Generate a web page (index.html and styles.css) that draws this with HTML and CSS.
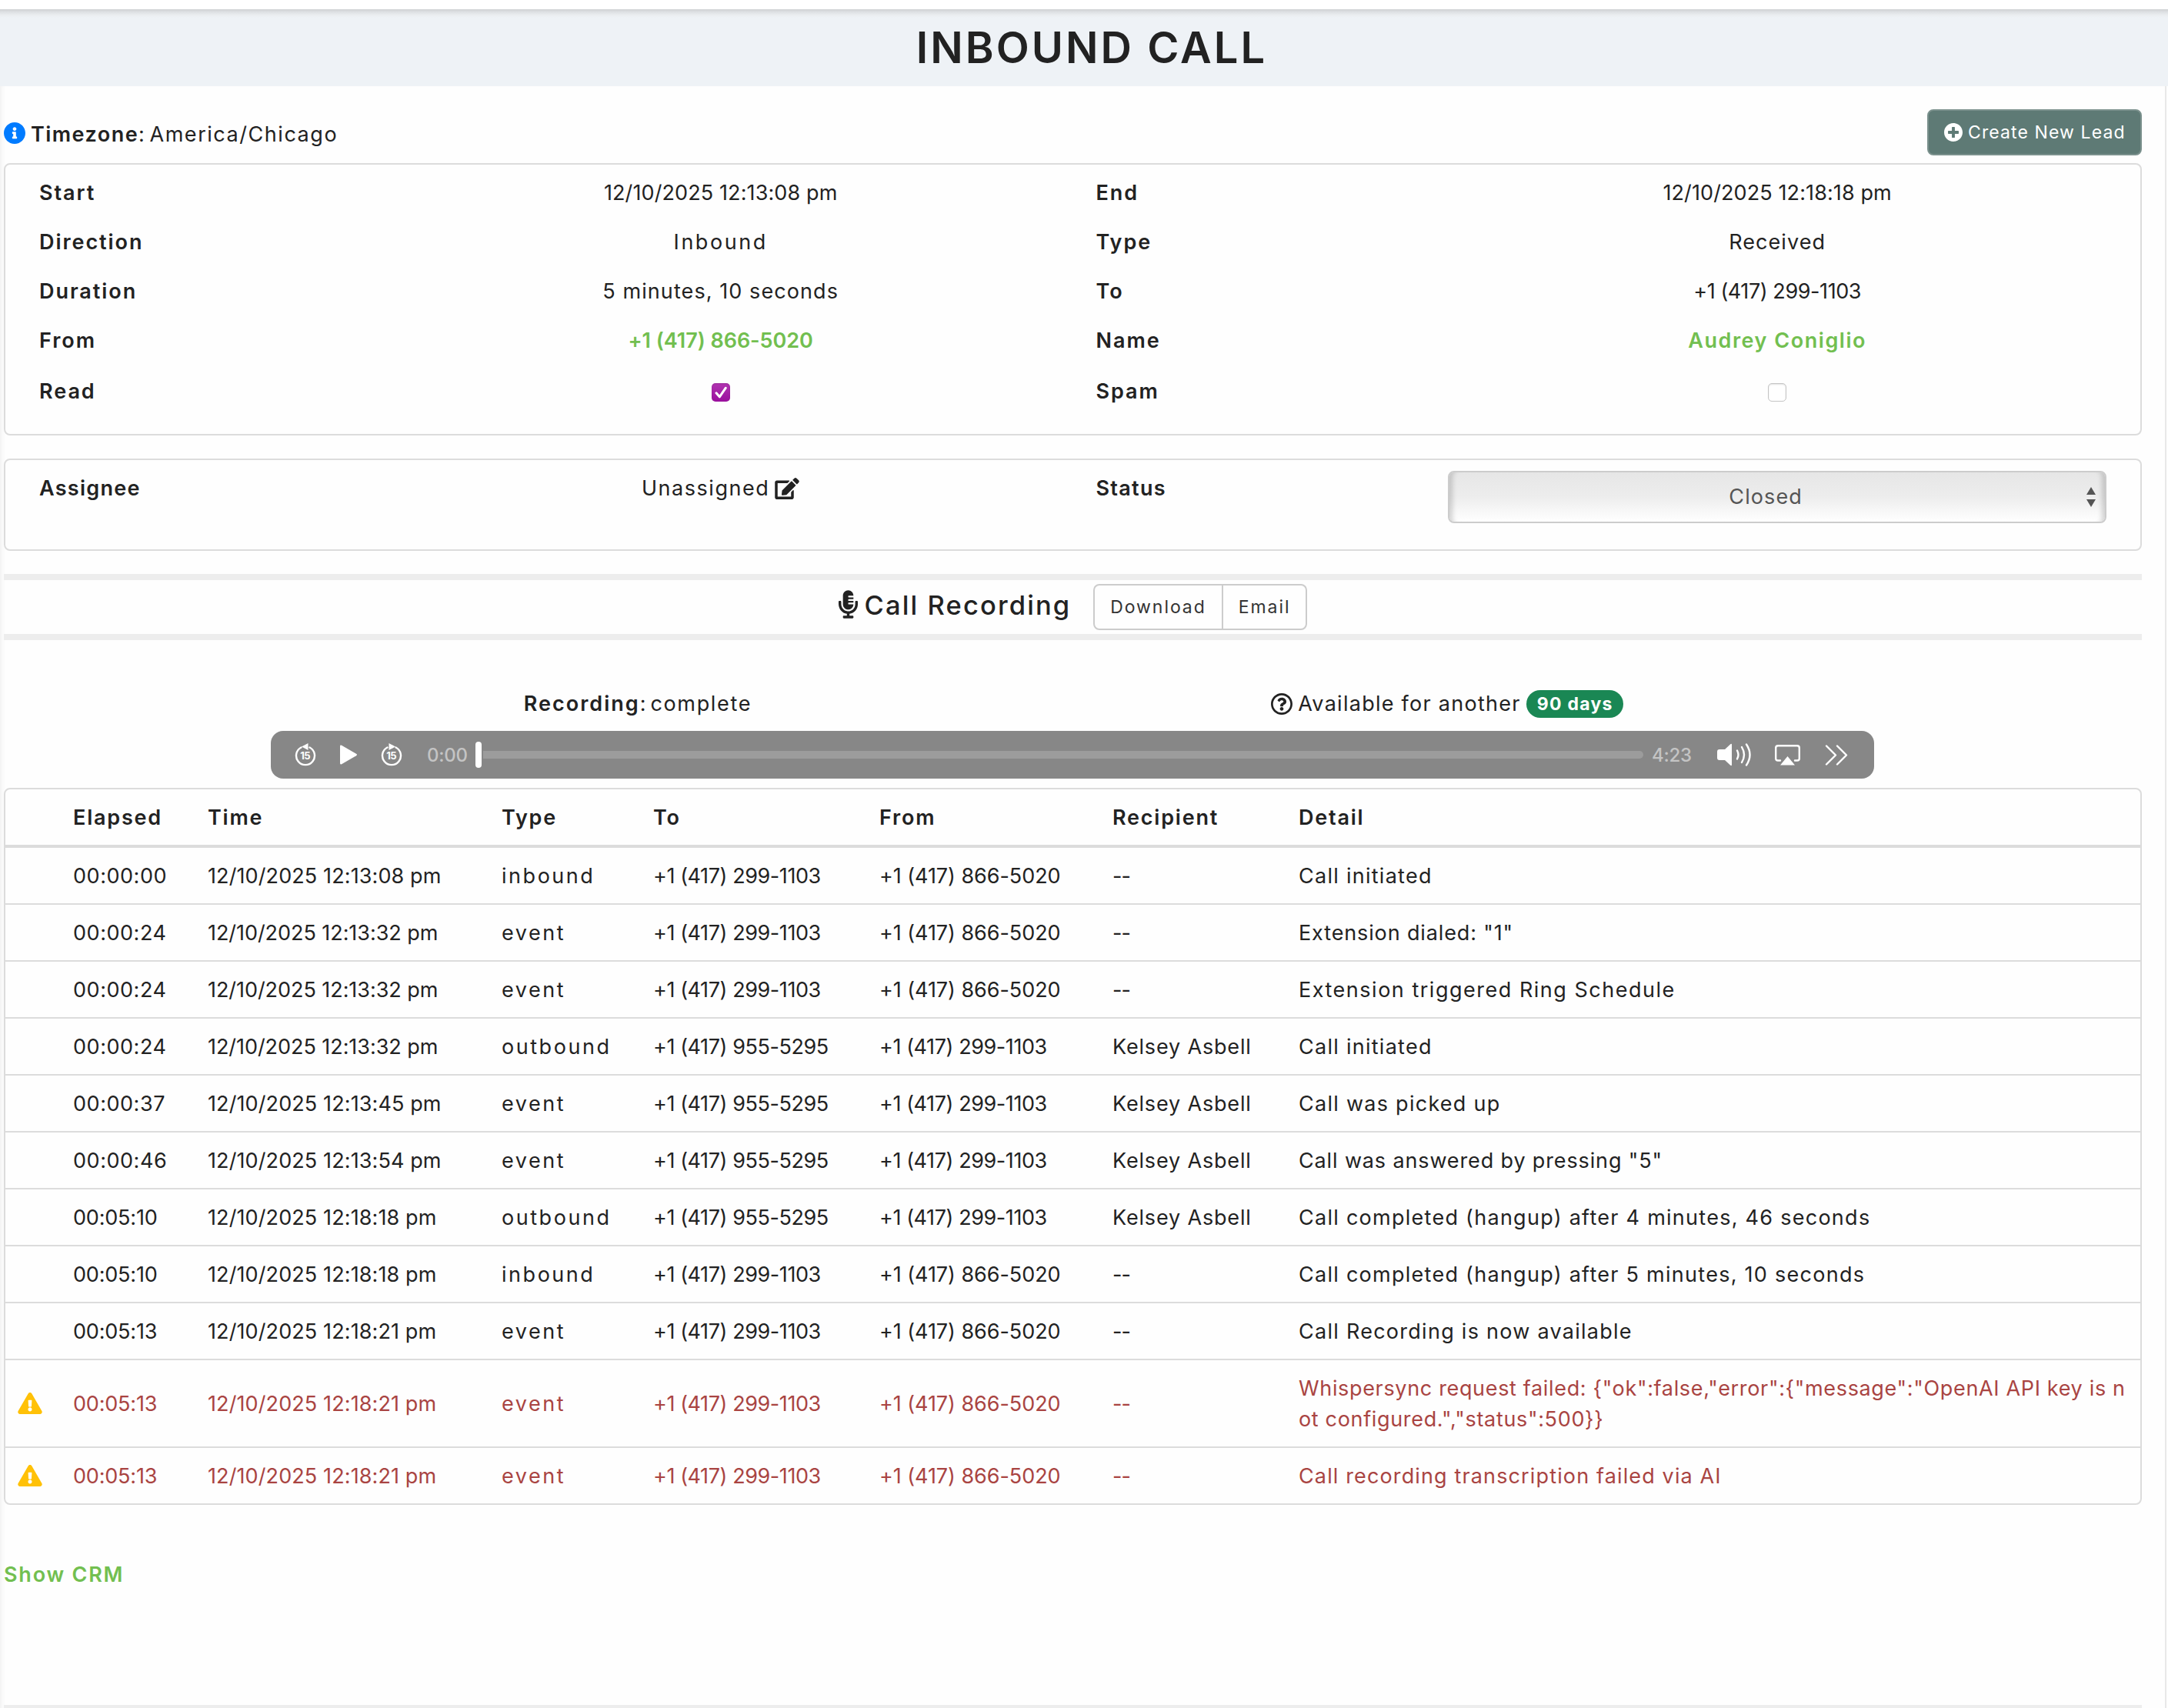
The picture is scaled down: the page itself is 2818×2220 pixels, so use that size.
FILE: index.html
```
<!DOCTYPE html>
<html lang="en">
<head>
  <meta charset="UTF-8">
  <title>Inbound Call</title>
  <link rel="stylesheet" href="styles.css">
</head>
<body>

  <!-- Shared icons -->
  <svg class="sprite" aria-hidden="true">
    <symbol id="icon-warning" viewBox="0 0 576 512">
      <path d="M569.517 440.013C587.975 472.007 564.806 512 527.940 512H48.054c-36.937 0-59.999-40.055-41.577-71.987L246.423 23.985c18.467-32.009 64.720-31.951 83.154 0l239.940 416.028zM288 354c-25.405 0-46 20.595-46 46s20.595 46 46 46 46-20.595 46-46-20.595-46-46-46zm-43.673-165.346l7.418 136c.347 6.364 5.609 11.346 11.982 11.346h48.546c6.373 0 11.635-4.982 11.982-11.346l7.418-136c.375-6.874-5.098-12.654-11.982-12.654h-63.383c-6.884 0-12.356 5.780-11.981 12.654z"/>
    </symbol>
  </svg>

  <div class="topbar"></div>
  <header class="page-title">
    <h1>INBOUND CALL</h1>
  </header>

  <main class="content">

    <div class="toolbar">
      <div class="timezone">
        <svg class="icon-info" viewBox="8 8 496 496"><path d="M256 8C119.043 8 8 119.083 8 256c0 136.997 111.043 248 248 248s248-111.003 248-248C504 119.083 392.957 8 256 8zm0 110c23.196 0 42 18.804 42 42s-18.804 42-42 42-42-18.804-42-42 18.804-42 42-42zm56 254c0 6.627-5.373 12-12 12h-88c-6.627 0-12-5.373-12-12v-24c0-6.627 5.373-12 12-12h12v-64h-12c-6.627 0-12-5.373-12-12v-24c0-6.627 5.373-12 12-12h64c6.627 0 12 5.373 12 12v100h12c6.627 0 12 5.373 12 12v24z"/></svg>
        <span><b>Timezone</b>: America/Chicago</span>
      </div>
      <button class="btn-lead" type="button">
        <svg class="icon-plus" viewBox="8 8 496 496"><path d="M256 8C119 8 8 119 8 256s111 248 248 248 248-111 248-248S393 8 256 8zm144 276c0 6.600-5.400 12-12 12h-92v92c0 6.600-5.400 12-12 12h-56c-6.600 0-12-5.400-12-12v-92h-92c-6.600 0-12-5.400-12-12v-56c0-6.600 5.400-12 12-12h92v-92c0-6.600 5.400-12 12-12h56c6.600 0 12 5.400 12 12v92h92c6.600 0 12 5.400 12 12v56z"/></svg>
        <span>Create New Lead</span>
      </button>
    </div>

    <!-- Call summary -->
    <section class="panel summary">
      <div class="label">Start</div>
      <div class="value time">12/10/2025 12:13:08 pm</div>
      <div class="label">End</div>
      <div class="value time">12/10/2025 12:18:18 pm</div>

      <div class="label">Direction</div>
      <div class="value word">Inbound</div>
      <div class="label">Type</div>
      <div class="value">Received</div>

      <div class="label">Duration</div>
      <div class="value">5 minutes, 10 seconds</div>
      <div class="label">To</div>
      <div class="value phone narrow">+1 (417) 299-1103</div>

      <div class="label">From</div>
      <div class="value phone"><a href="#">+1 (417) 866-5020</a></div>
      <div class="label">Name</div>
      <div class="value name"><a href="#">Audrey Coniglio</a></div>

      <div class="label last">Read</div>
      <div class="value last">
        <span class="checkbox checked"><svg viewBox="0 0 24 24"><path d="M6 12.800l4.300 5L18.200 6.300"/></svg></span>
      </div>
      <div class="label last">Spam</div>
      <div class="value last"><span class="checkbox"></span></div>
    </section>

    <!-- Assignment -->
    <section class="panel assign">
      <div class="label">Assignee</div>
      <div class="value">
        Unassigned
        <svg class="icon-edit" viewBox="0 0 576 512"><path d="M402.600 83.200l90.200 90.200c3.800 3.800 3.800 10 0 13.800L274.400 405.600l-92.800 10.300c-12.400 1.400-22.900-9.100-21.500-21.500l10.300-92.800L388.800 83.200c3.800-3.800 10-3.800 13.800 0zm162-22.900l-48.800-48.800c-15.200-15.200-39.900-15.200-55.200 0l-35.400 35.400c-3.800 3.800-3.800 10 0 13.800l90.200 90.200c3.800 3.800 10 3.800 13.800 0l35.400-35.400c15.200-15.300 15.200-40 0-55.200zM384 346.200V448H64V128h229.800c3.200 0 6.200-1.300 8.500-3.500l40-40c7.600-7.600 2.200-20.500-8.500-20.500H48C21.500 64 0 85.500 0 112v352c0 26.500 21.500 48 48 48h352c26.500 0 48-21.500 48-48V306.200c0-10.700-12.900-16-20.500-8.500l-40 40c-2.200 2.300-3.500 5.300-3.500 8.500z"/></svg>
      </div>
      <div class="label">Status</div>
      <div class="status-cell">
        <div class="select">
          <span>Closed</span>
          <svg viewBox="0 0 12 26"><path d="M6 0l6 10H0zM6 26l6-10H0z"/></svg>
        </div>
      </div>
    </section>

    <!-- Recording -->
    <div class="recording-head">
      <svg class="icon-mic" viewBox="0 0 352 512"><path d="M336 192h-16c-8.840 0-16 7.160-16 16v48c0 74.800-64.490 134.820-140.790 127.380C96.710 376.890 48 317.110 48 250.300V208c0-8.840-7.160-16-16-16H16c-8.840 0-16 7.160-16 16v40.160c0 89.640 63.970 169.550 152 181.690V464H96c-8.840 0-16 7.160-16 16v16c0 8.840 7.160 16 16 16h160c8.840 0 16-7.160 16-16v-16c0-8.840-7.160-16-16-16h-56v-33.770C285.710 418.470 352 344.900 352 256v-48c0-8.840-7.160-16-16-16zM176 352c53.020 0 96-42.980 96-96h-85.330c-5.890 0-10.670-3.580-10.670-8v-16c0-4.420 4.780-8 10.670-8H272v-32h-85.330c-5.890 0-10.670-3.580-10.670-8v-16c0-4.420 4.780-8 10.670-8H272v-32h-85.330c-5.890 0-10.670-3.580-10.670-8v-16c0-4.420 4.780-8 10.670-8H272c0-53.020-42.980-96-96-96S80 42.980 80 96v160c0 53.020 42.980 96 96 96z"/></svg>
      <h2>Call Recording</h2>
      <div class="btn-group">
        <button type="button">Download</button>
        <button type="button">Email</button>
      </div>
    </div>

    <div class="recording-info">
      <div class="recording-state"><span><b>Recording</b>: complete</span></div>
      <div>
        <svg class="icon-question" viewBox="8 8 496 496"><path d="M256 8C119.043 8 8 119.083 8 256c0 136.997 111.043 248 248 248s248-111.003 248-248C504 119.083 392.957 8 256 8zm0 448c-110.532 0-200-89.431-200-200 0-110.495 89.472-200 200-200 110.491 0 200 89.471 200 200 0 110.530-89.431 200-200 200zm107.244-255.200c0 67.052-72.421 68.084-72.421 92.863V300c0 6.627-5.373 12-12 12h-45.647c-6.627 0-12-5.373-12-12v-8.659c0-35.745 27.100-50.034 47.579-61.516 17.561-9.845 28.324-16.541 28.324-29.579 0-17.246-21.999-28.693-39.784-28.693-23.189 0-33.894 10.977-48.942 29.969-4.057 5.120-11.460 6.071-16.666 2.124l-27.824-21.098c-5.107-3.872-6.251-11.066-2.644-16.363C184.846 131.491 214.940 112 261.794 112c49.071 0 101.450 38.304 101.450 88.800zM298 368c0 23.159-18.841 42-42 42s-42-18.841-42-42 18.841-42 42-42 42 18.841 42 42z"/></svg>
        <span>Available for another</span>
        <span class="badge">90 days</span>
      </div>
    </div>

    <div class="player">
      <svg class="skip" viewBox="0 0 28 30">
        <path class="line" d="M8.500 5.500A12 12 0 1 0 19.500 5.500"/>
        <path d="M9 4.500L17.500 0v9z"/>
        <text x="13.500" y="21">15</text>
      </svg>
      <svg class="play" viewBox="0 0 22 26"><path d="M0 2Q0 0 2 .8L21 11.800Q23 13 21 14.200L2 25.200Q0 26 0 24z"/></svg>
      <svg class="skip" viewBox="0 0 28 30">
        <path class="line" d="M19.500 5.500A12 12 0 1 1 8.500 5.500"/>
        <path d="M19 4.500L10.500 0v9z"/>
        <text x="13.500" y="21">15</text>
      </svg>
      <span class="clock">0:00</span>
      <div class="slider"><div class="thumb"></div><div class="track"></div></div>
      <span class="clock">4:23</span>
      <svg class="volume" viewBox="0 0 44 30">
        <path d="M3 8h7l7-6.500Q19 0 19 2v26q0 2-2 .5L10 22H3q-3 0-3-3v-8q0-3 3-3z"/>
        <path class="line" d="M26 9.500q3 5.500 0 11M32 5q6 10 0 20M38 1.500q9 13.500 0 27"/>
      </svg>
      <svg class="airplay" viewBox="0 0 33 27">
        <path class="line" d="M7 20.500H4Q1.200 20.500 1.200 18V4Q1.200 1.200 4 1.200H29Q31.800 1.200 31.800 4V18Q31.800 20.500 29 20.500H26"/>
        <path d="M16.500 15L26 26.500H7z"/>
      </svg>
      <svg class="more" viewBox="0 0 30 27"><path class="line" d="M2 1.500l12 12-12 12M16 1.500l12 12-12 12"/></svg>
    </div>

    <!-- Call events -->
    <div class="table-wrap">
      <table class="events">
        <colgroup>
          <col class="c-icon"><col class="c-elapsed"><col class="c-time"><col class="c-type"><col class="c-to"><col class="c-from"><col class="c-recipient"><col>
        </colgroup>
        <thead>
          <tr>
            <th></th>
            <th>Elapsed</th>
            <th>Time</th>
            <th>Type</th>
            <th>To</th>
            <th>From</th>
            <th>Recipient</th>
            <th>Detail</th>
          </tr>
        </thead>
        <tbody>
          <tr>
            <td></td>
            <td class="elapsed">00:00:00</td>
            <td class="time">12/10/2025 12:13:08 pm</td>
            <td class="word">inbound</td>
            <td class="phone narrow">+1 (417) 299-1103</td>
            <td class="phone">+1 (417) 866-5020</td>
            <td class="none">--</td>
            <td>Call initiated</td>
          </tr>
          <tr>
            <td></td>
            <td class="elapsed">00:00:24</td>
            <td class="time narrow">12/10/2025 12:13:32 pm</td>
            <td class="word">event</td>
            <td class="phone narrow">+1 (417) 299-1103</td>
            <td class="phone">+1 (417) 866-5020</td>
            <td class="none">--</td>
            <td class="tight">Extension dialed: "1"</td>
          </tr>
          <tr>
            <td></td>
            <td class="elapsed">00:00:24</td>
            <td class="time narrow">12/10/2025 12:13:32 pm</td>
            <td class="word">event</td>
            <td class="phone narrow">+1 (417) 299-1103</td>
            <td class="phone">+1 (417) 866-5020</td>
            <td class="none">--</td>
            <td class="loose">Extension triggered Ring Schedule</td>
          </tr>
          <tr>
            <td></td>
            <td class="elapsed">00:00:24</td>
            <td class="time narrow">12/10/2025 12:13:32 pm</td>
            <td class="word">outbound</td>
            <td class="phone narrow">+1 (417) 955-5295</td>
            <td class="phone narrow">+1 (417) 299-1103</td>
            <td class="agent">Kelsey Asbell</td>
            <td>Call initiated</td>
          </tr>
          <tr>
            <td></td>
            <td class="elapsed">00:00:37</td>
            <td class="time">12/10/2025 12:13:45 pm</td>
            <td class="word">event</td>
            <td class="phone narrow">+1 (417) 955-5295</td>
            <td class="phone narrow">+1 (417) 299-1103</td>
            <td class="agent">Kelsey Asbell</td>
            <td>Call was picked up</td>
          </tr>
          <tr>
            <td></td>
            <td class="elapsed">00:00:46</td>
            <td class="time">12/10/2025 12:13:54 pm</td>
            <td class="word">event</td>
            <td class="phone narrow">+1 (417) 955-5295</td>
            <td class="phone narrow">+1 (417) 299-1103</td>
            <td class="agent">Kelsey Asbell</td>
            <td class="tight">Call was answered by pressing "5"</td>
          </tr>
          <tr>
            <td></td>
            <td class="elapsed narrow">00:05:10</td>
            <td class="time">12/10/2025 12:18:18 pm</td>
            <td class="word">outbound</td>
            <td class="phone narrow">+1 (417) 955-5295</td>
            <td class="phone narrow">+1 (417) 299-1103</td>
            <td class="agent">Kelsey Asbell</td>
            <td>Call completed (hangup) after 4 minutes, 46 seconds</td>
          </tr>
          <tr>
            <td></td>
            <td class="elapsed narrow">00:05:10</td>
            <td class="time">12/10/2025 12:18:18 pm</td>
            <td class="word">inbound</td>
            <td class="phone narrow">+1 (417) 299-1103</td>
            <td class="phone">+1 (417) 866-5020</td>
            <td class="none">--</td>
            <td>Call completed (hangup) after 5 minutes, 10 seconds</td>
          </tr>
          <tr>
            <td></td>
            <td class="elapsed narrow">00:05:13</td>
            <td class="time">12/10/2025 12:18:21 pm</td>
            <td class="word">event</td>
            <td class="phone narrow">+1 (417) 299-1103</td>
            <td class="phone">+1 (417) 866-5020</td>
            <td class="none">--</td>
            <td>Call Recording is now available</td>
          </tr>
          <tr class="error">
            <td class="flag"><svg><use href="#icon-warning"/></svg></td>
            <td class="elapsed narrow">00:05:13</td>
            <td class="time">12/10/2025 12:18:21 pm</td>
            <td class="word">event</td>
            <td class="phone narrow">+1 (417) 299-1103</td>
            <td class="phone">+1 (417) 866-5020</td>
            <td class="none">--</td>
            <td class="payload">Whispersync request failed: {"ok":false,"error":{"message":"OpenAI API key is not configured.","status":500}}</td>
          </tr>
          <tr class="error">
            <td class="flag"><svg><use href="#icon-warning"/></svg></td>
            <td class="elapsed narrow">00:05:13</td>
            <td class="time">12/10/2025 12:18:21 pm</td>
            <td class="word">event</td>
            <td class="phone narrow">+1 (417) 299-1103</td>
            <td class="phone">+1 (417) 866-5020</td>
            <td class="none">--</td>
            <td class="snug">Call recording transcription failed via AI</td>
          </tr>
        </tbody>
      </table>
    </div>

    <a class="show-crm" href="#">Show CRM</a>
    <div class="footer-line"></div>
  </main>

</body>
</html>
```
FILE: styles.css
```
* {
  box-sizing: border-box;
}

body {
  margin: 0;
  height: 2220px;
  overflow: hidden;
  display: flex;
  flex-direction: column;
  font-family: "Inter", "Liberation Sans", sans-serif;
  font-size: 27px;
  line-height: 40px;
  letter-spacing: 0.047em;
  color: #222;
  background-color: #fefefe;
}

b,
th {
  font-weight: 600;
}

a {
  color: #72bf50;
  font-weight: 600;
  text-decoration: none;
}

button {
  font-family: inherit;
  font-size: 23px;
  cursor: pointer;
}

svg {
  display: block;
  flex: none;
  fill: currentColor;
}

.sprite {
  display: none;
}

/* text kinds */
.value {
  letter-spacing: 0.04em;
}

.time {
  letter-spacing: 0.004em;
}

.time.narrow {
  letter-spacing: -0.002em;
}

.word {
  letter-spacing: 0.094em;
}

.elapsed {
  letter-spacing: 0.02em;
}

.elapsed.narrow {
  letter-spacing: -0.007em;
}

.phone {
  letter-spacing: -0.002em;
}

.phone.narrow {
  letter-spacing: -0.0155em;
}

.name {
  letter-spacing: 0.057em;
}

.agent {
  letter-spacing: 0.031em;
}

.none {
  letter-spacing: -0.03em;
}

.tight {
  letter-spacing: 0.032em;
}

.snug {
  letter-spacing: 0.042em;
}

.loose {
  letter-spacing: 0.056em;
}

/* header */
.topbar {
  height: 12px;
  flex: none;
  background-color: #fff;
}

.page-title {
  height: 100px;
  flex: none;
  padding-left: 20px;
  background: linear-gradient(#cfd1d3, #dfe2e5 4px, #ebeef1 8px, #eef2f6 11px);
}

h1 {
  margin: 0;
  font-size: 56px;
  font-weight: 600;
  line-height: 101px;
  letter-spacing: 0.054em;
  text-align: center;
}

.content {
  flex: 1;
  width: 2816px;
  padding: 0 30px 0 5px;
  border-right: 2px solid #e8e8e8;
  box-shadow: inset 6px 0 6px -4px rgba(0, 0, 0, 0.06);
}

/* toolbar */
.toolbar {
  display: flex;
  justify-content: space-between;
  height: 100px;
}

.timezone {
  display: flex;
  gap: 7px;
  padding-top: 43px;
  letter-spacing: 0.057em;
  word-spacing: -4px;
}

.timezone b {
  letter-spacing: 0.054em;
}

.icon-info {
  width: 28px;
  height: 28px;
  margin-top: 4px;
  color: #007bff;
}

.btn-lead {
  display: flex;
  align-items: center;
  gap: 7px;
  width: 279px;
  height: 60px;
  margin-top: 30px;
  padding: 0 0 0 20px;
  border: 2px solid #7b918d;
  border-radius: 8px;
  background-color: #5e7a75;
  color: #fff;
  letter-spacing: 0.048em;
}

.icon-plus {
  width: 24px;
  height: 24px;
}

/* panels */
.panel {
  display: grid;
  grid-template-columns: 1fr 2fr 1fr 2fr;
  padding: 5px 14px 21px;
  border: 2px solid #dcdcdc;
  border-radius: 8px;
  line-height: 64px;
}

.label {
  padding-left: 30px;
  font-weight: 600;
  letter-spacing: 0.072em;
}

.value {
  display: flex;
  justify-content: center;
  align-items: center;
}

.last {
  line-height: 68px;
}

.checkbox {
  width: 24px;
  height: 24px;
  margin-top: 2px;
  border: 1px solid #c4c4c4;
  border-radius: 5px;
  background-color: #fff;
  box-shadow: inset 0 1px 2px rgba(0, 0, 0, 0.12);
}

.checkbox.checked {
  border: none;
  background: linear-gradient(#b135b1, #9a0f9d);
}

.checkbox svg {
  width: 24px;
  height: 24px;
  fill: none;
  stroke: #fff;
  stroke-width: 3;
  stroke-linecap: round;
  stroke-linejoin: round;
}

.assign {
  height: 120px;
  margin-top: 30px;
}

.assign .label {
  letter-spacing: 0.048em;
}

.assign .value {
  height: 64px;
  gap: 7px;
  letter-spacing: 0.057em;
}

.icon-edit {
  width: 32px;
  height: 28px;
}

.status-cell {
  padding: 9px 30px 0;
}

.select {
  display: flex;
  align-items: center;
  justify-content: space-between;
  height: 68px;
  padding: 0 12px 0 363px;
  border: 2px solid #ccc;
  border-radius: 8px;
  background: linear-gradient(#e6e6e6, #ededed 50%, #fff);
  box-shadow: inset 10px 0 6px -6px rgba(0, 0, 0, 0.16), inset -10px 0 6px -6px rgba(0, 0, 0, 0.16);
  color: #555;
  letter-spacing: 0.041em;
}

.select svg {
  width: 12px;
  height: 26px;
}

/* recording */
.recording-head {
  display: flex;
  justify-content: center;
  align-items: center;
  height: 86px;
  margin-top: 30px;
  border-top: 8px solid #ededed;
  border-bottom: 8px solid #ededed;
}

.icon-mic {
  width: 25px;
  height: 37px;
  margin: 0 9px 7px 0;
}

h2 {
  margin: 0 29px 4px 0;
  font-size: 34.5px;
  font-weight: 500;
  letter-spacing: 0.061em;
}

.btn-group {
  display: flex;
  height: 60px;
  border: 2px solid #ccc;
  border-radius: 8px;
}

.btn-group button {
  padding: 0 20px;
  border: none;
  background: none;
  color: #333;
  letter-spacing: 0.084em;
}

.btn-group button + button {
  border-left: 2px solid #ccc;
}

.recording-info {
  display: grid;
  grid-template-columns: 1052px 1052px;
  margin: 62px 0 15px 298px;
}

.recording-info > div {
  display: flex;
  justify-content: center;
  align-items: center;
}

.recording-info span {
  padding-top: 1px;
}

.recording-state {
  letter-spacing: 0.062em;
  word-spacing: -5px;
}

.recording-state b {
  letter-spacing: 0.074em;
}

.icon-question {
  width: 28px;
  height: 28px;
  margin-right: 7px;
}

.recording-info .badge {
  height: 36px;
  margin-left: 7px;
  padding: 0 13px 0 14px;
  border-radius: 18px;
  background-color: #1a8754;
  color: #fff;
  font-size: 23px;
  font-weight: 700;
  line-height: 36px;
}

.player {
  display: flex;
  align-items: center;
  width: 2084px;
  height: 62px;
  margin: 0 0 12px 347px;
  padding: 0 34px 0 31px;
  border-radius: 16px;
  background-color: #878787;
  color: #fff;
}

.player .line {
  fill: none;
  stroke: currentColor;
  stroke-width: 2.4;
  stroke-linecap: round;
  stroke-linejoin: round;
}

.skip {
  width: 28px;
  height: 30px;
}

.skip text {
  font-size: 13px;
  font-weight: 700;
  letter-spacing: -0.7px;
  text-anchor: middle;
}

.play {
  width: 22px;
  height: 26px;
  margin: 0 31px;
}

.clock {
  width: 54px;
  padding-top: 1px;
  font-size: 24px;
  font-weight: 500;
  letter-spacing: -0.01em;
  color: #c4c4c4;
}

.skip + .clock {
  margin: 0 9px 0 32px;
}

.slider {
  flex: 1;
  display: flex;
  align-items: center;
  margin-right: 11px;
}

.thumb {
  width: 8px;
  height: 34px;
  border-radius: 4px;
  background-color: #fff;
}

.track {
  flex: 1;
  height: 10px;
  margin-left: 2px;
  border-radius: 0 5px 5px 0;
  background-color: #9c9c9c;
}

.volume {
  width: 44px;
  height: 30px;
  margin-left: 31px;
}

.airplay {
  width: 33px;
  height: 27px;
  margin: 0 32px 0 31px;
}

.more {
  width: 30px;
  height: 27px;
}

/* events table */
.table-wrap {
  border: 2px solid #dcdcdc;
  border-radius: 8px;
}

.events {
  width: 100%;
  table-layout: fixed;
  border-collapse: separate;
  border-spacing: 0;
}

.c-icon { width: 72px; }
.c-elapsed { width: 175px; }
.c-time { width: 382px; }
.c-type { width: 197px; }
.c-to { width: 294px; }
.c-from { width: 303px; }
.c-recipient { width: 242px; }

th,
td {
  padding: 17px 16px 15px;
  text-align: left;
  vertical-align: middle;
}

th {
  border-bottom: 4px solid #dcdcdc;
  letter-spacing: 0.066em;
}

tbody tr:not(:last-child) td {
  border-bottom: 2px solid #dcdcdc;
}

.events .payload {
  letter-spacing: 0.0245em;
  word-break: break-all;
}

.error {
  color: #a94442;
}

.flag svg {
  width: 32px;
  height: 28px;
  margin-top: -2px;
  color: #ffc107;
}

.show-crm {
  display: block;
  margin-top: 71px;
  letter-spacing: 0.066em;
}

.footer-line {
  height: 8px;
  margin-top: 149px;
  background-color: #ededed;
}
```
